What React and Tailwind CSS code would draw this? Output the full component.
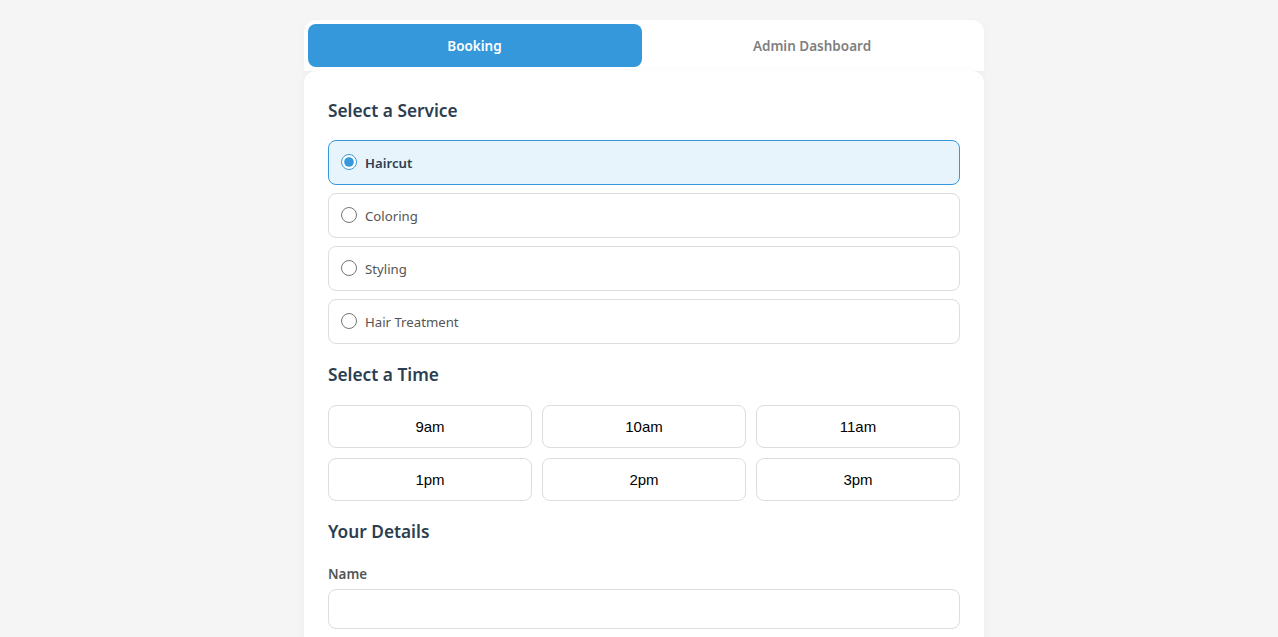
import React, { useState } from "react";

const services = ["Haircut", "Coloring", "Styling", "Hair Treatment"];
const times = ["9am", "10am", "11am", "1pm", "2pm", "3pm"];

const App = () => {
  const [service, setService] = useState("Haircut");

  return (
    <div className="h-screen overflow-hidden bg-[#f5f5f5] pl-2.5 font-['Noto_Sans',sans-serif]">
      <div className="mx-auto w-[680px] pt-5">
        {/* Tabs */}
        <div className="flex h-[51px] rounded-t-xl bg-white p-1 shadow-[0_2px_10px_rgba(0,0,0,0.03)]">
          <button className="h-[43px] w-[334px] rounded-lg bg-[#3498db] pt-px pr-px text-[13.5px] font-semibold text-white">
            Booking
          </button>
          <button className="h-[43px] flex-1 rounded-lg pt-px pl-0.5 text-[13.5px] font-semibold text-[#7f7f7f]">
            Admin Dashboard
          </button>
        </div>

        {/* Form card */}
        <div className="rounded-xl bg-white px-6 pt-[25px] pb-8 shadow-[0_2px_10px_rgba(0,0,0,0.05)]">
          <h2 className="mb-3.5 text-[17.3px] leading-[30px] font-semibold text-[#2c3e50]">Select a Service</h2>
          <div className="flex flex-col gap-2">
            {services.map((s) => {
              const active = s === service;
              return (
                <label
                  key={s}
                  className={
                    active
                      ? "flex h-[45px] cursor-pointer items-center rounded-lg border border-[#3498db] bg-[#e8f4fc] px-3 text-[13.2px] font-semibold text-[#2c3e50]"
                      : "flex h-[45px] cursor-pointer items-center rounded-lg border border-[#dddddd] bg-white px-3 text-[13.2px] text-[#555555]"
                  }
                >
                  <input
                    type="radio"
                    name="service"
                    checked={active}
                    onChange={() => setService(s)}
                    className="mr-2 mb-px ml-0 h-4 w-4 accent-[#3498db]"
                  />
                  <span className="pt-0.5">{s}</span>
                </label>
              );
            })}
          </div>

          <h2 className="mt-4 mb-[15px] text-[17.3px] leading-[30px] font-semibold text-[#2c3e50]">Select a Time</h2>
          <div className="grid grid-cols-3 gap-2.5">
            {times.map((t) => (
              <button
                key={t}
                className="h-[43px] rounded-lg border border-[#dddddd] bg-white pt-px font-['Liberation_Sans',sans-serif] text-[15px] text-black"
              >
                {t}
              </button>
            ))}
          </div>

          <h2 className="mt-4 mb-4 text-[17.3px] leading-[30px] font-semibold text-[#2c3e50]">Your Details</h2>
          <label className="mb-1 block text-[13.4px] leading-[22px] font-semibold text-[#555555]">Name</label>
          <input type="text" className="block h-10 w-full rounded-lg border border-[#dddddd] px-3 text-sm" />
        </div>
      </div>
    </div>
  );
};

export default App;
